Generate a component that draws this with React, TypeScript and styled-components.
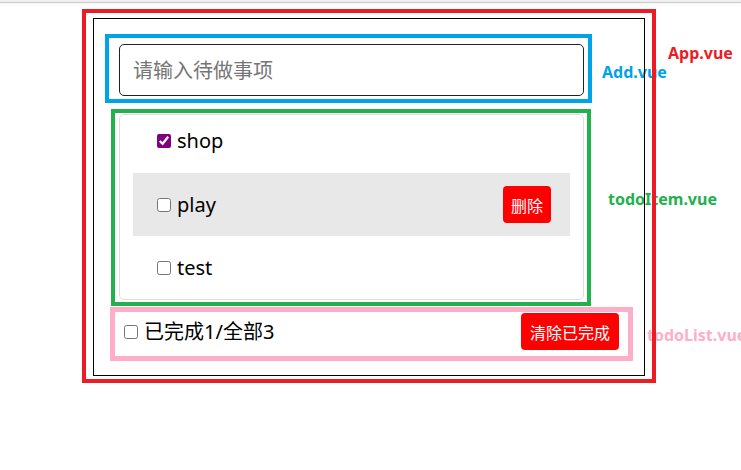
import React, { useState } from 'react';
import styled, { createGlobalStyle } from 'styled-components';

interface Todo {
    id: string;
    title: string;
    done: boolean;
}

const GlobalStyle = createGlobalStyle`
    html, body {
        margin: 0;
        padding: 0;
        background: #fff;
    }
    body {
        width: 741px;
        height: 470px;
        overflow: hidden;
        font-family: "Noto Sans", "Noto Sans CJK SC", sans-serif;
    }
`

function App() {
    const [todos, setTodos] = useState<Todo[]>([
        { id: '1', title: 'shop', done: true },
        { id: '2', title: 'play', done: false },
        { id: '3', title: 'test', done: false },
    ]);
    const doneCount = todos.filter(t => t.done).length;

    function toggle(id: string) {
        setTodos(todos.map(t => (t.id === id ? { ...t, done: !t.done } : t)));
    }

    return (
        <Stage>
            <GlobalStyle />
            <TabStrip />
            <Note $color="#ed1c24" $x={668} $y={45}>App.vue</Note>
            <Note $color="#00a2e8" $x={602} $y={64}>Add.vue</Note>
            <Note $color="#22b14c" $x={608} $y={191}>todoItem.vue</Note>
            <Note $color="#ffaec9" $x={647} $y={327}>todoList.vue</Note>

            <AppFrame>
                <TodoWrap>
                    <AddOutline>
                        <TodoInput placeholder="请输入待做事项" />
                    </AddOutline>

                    <ListOutline>
                        <List>
                            {todos.map((t, i) => (
                                <Item key={t.id} $active={i === 1}>
                                    <ItemLabel>
                                        <Check type="checkbox" checked={t.done} onChange={() => toggle(t.id)} />
                                        <span>{t.title}</span>
                                    </ItemLabel>
                                    {i === 1 && <DangerButton $width={48}>删除</DangerButton>}
                                </Item>
                            ))}
                        </List>
                    </ListOutline>

                    <FooterOutline>
                        <ItemLabel>
                            <Check type="checkbox" $footer checked={false} readOnly />
                            <span>已完成{doneCount}/全部{todos.length}</span>
                        </ItemLabel>
                        <DangerButton $width={98}>清除已完成</DangerButton>
                    </FooterOutline>
                </TodoWrap>
            </AppFrame>
        </Stage>
    );
}

const Stage = styled.div`
    position: relative;
    width: 741px;
    height: 470px;
`

const TabStrip = styled.div`
    height: 2px;
    background: #efefef;
    border-bottom: 1px solid #c9c9c9;
    box-shadow: 0 2px 3px rgba(0, 0, 0, 0.04);
`

const Note = styled.span<{ $color: string; $x: number; $y: number }>`
    position: absolute;
    left: ${p => p.$x}px;
    top: ${p => p.$y}px;
    color: ${p => p.$color};
    font-family: "Noto Sans", sans-serif;
    font-size: 16px;
    font-weight: 700;
    line-height: 16px;
    white-space: nowrap;
`

const AppFrame = styled.div`
    position: relative;
    z-index: 1;
    box-sizing: border-box;
    width: 574px;
    height: 374px;
    margin: 6px 0 0 82px;
    padding: 5px 7px 3px 7px;
    border: 4px solid #ed1c24;
`

const TodoWrap = styled.div`
    box-sizing: border-box;
    height: 100%;
    padding-top: 15px;
    border: 1px solid #000;
`

const AddOutline = styled.div`
    box-sizing: border-box;
    width: 487px;
    margin-left: 11px;
    padding: 6px 4px 3px 10px;
    border: 4px solid #00a2e8;
`

const TodoInput = styled.input`
    display: block;
    box-sizing: border-box;
    width: 100%;
    height: 52px;
    padding: 0 13px;
    border: 1px solid #222;
    border-radius: 5px;
    outline: none;
    font-family: "Noto Sans", "Noto Sans CJK SC", sans-serif;
    font-size: 20px;
    color: #000;
    ::placeholder {
        color: #757575;
    }
`

const ListOutline = styled.div`
    box-sizing: border-box;
    width: 480px;
    margin: 6px 0 0 17px;
    padding: 1px 3px 2px 4px;
    border: 4px solid #22b14c;
`

const List = styled.ul`
    margin: 0;
    padding: 0 13px;
    list-style: none;
    border: 1px solid #ddd;
    border-radius: 5px;
`

const Item = styled.li<{ $active?: boolean }>`
    box-sizing: border-box;
    display: flex;
    align-items: center;
    height: 63px;
    padding: 0 19px 0 20px;
    background: ${p => (p.$active ? '#e8e8e8' : 'transparent')};
    &:first-child {
        height: 58px;
        padding-bottom: 6px;
    }
`

const ItemLabel = styled.label`
    display: flex;
    align-items: center;
    font-size: 20px;
    line-height: 1;
    color: #000;
`

const Check = styled.input<{ $footer?: boolean }>`
    width: 14px;
    height: 14px;
    margin: ${p => (p.$footer ? '0 6px 0 0' : '0 6px 0 4px')};
    accent-color: #800080;
`

const DangerButton = styled.button<{ $width: number }>`
    margin-left: auto;
    width: ${p => p.$width}px;
    height: 37px;
    padding: 0;
    border: none;
    border-radius: 4px;
    background: #ff0000;
    color: #fff;
    font-family: "Noto Sans CJK SC", sans-serif;
    font-size: 16px;
    cursor: pointer;
`

const FooterOutline = styled.div`
    box-sizing: border-box;
    display: flex;
    align-items: center;
    width: 523px;
    height: 54px;
    margin: 1px 0 0 16px;
    padding: 1px 9px 6px 9px;
    border: 5px solid #ffaec9;
`

export default App;
